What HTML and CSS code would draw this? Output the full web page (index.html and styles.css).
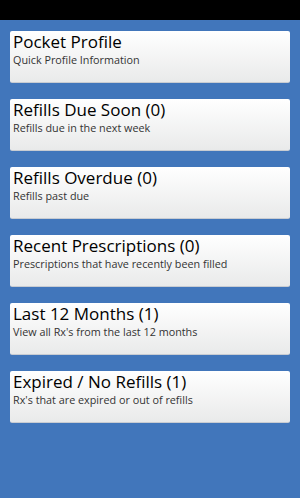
FILE: index.html
```html
<!DOCTYPE html>
<html>
<head>
    <title>Pocket Rx</title>
    <link rel="stylesheet" href="styles.css">
</head>
<body>
    <div class="status-bar"></div>
    <div class="menu">
        <div class="menu-item">
            <div class="menu-title">Pocket Profile</div>
            <div class="menu-desc">Quick Profile Information</div>
        </div>
        <div class="menu-item">
            <div class="menu-title">Refills Due Soon (0)</div>
            <div class="menu-desc">Refills due in the next week</div>
        </div>
        <div class="menu-item">
            <div class="menu-title">Refills Overdue (0)</div>
            <div class="menu-desc">Refills past due</div>
        </div>
        <div class="menu-item">
            <div class="menu-title">Recent Prescriptions (0)</div>
            <div class="menu-desc">Prescriptions that have recently been filled</div>
        </div>
        <div class="menu-item">
            <div class="menu-title">Last 12 Months (1)</div>
            <div class="menu-desc">View all Rx's from the last 12 months</div>
        </div>
        <div class="menu-item">
            <div class="menu-title">Expired / No Refills (1)</div>
            <div class="menu-desc">Rx's that are expired or out of refills</div>
        </div>
    </div>
</body>
</html>
```

FILE: styles.css
```css
html, body {
    margin: 0;
    height: 100%;
}
body {
    background-color: #4176bb;
    font-family: "Open Sans", sans-serif;
}
.status-bar {
    height: 20px;
    background-color: #000;
}
.menu {
    padding: 11px 10px;
    display: flex;
    flex-direction: column;
    gap: 16px;
}
.menu-item {
    height: 52px;
    box-sizing: border-box;
    padding: 0 3px;
    background: linear-gradient(#ffffff, #e9eaea);
    border-radius: 2px;
    border-bottom: 1px solid #c8ccd2;
}
.menu-title {
    font-size: 17px;
    line-height: 21px;
    color: #000;
}
.menu-desc {
    font-size: 10.8px;
    line-height: 15px;
    color: #333;
}
```
